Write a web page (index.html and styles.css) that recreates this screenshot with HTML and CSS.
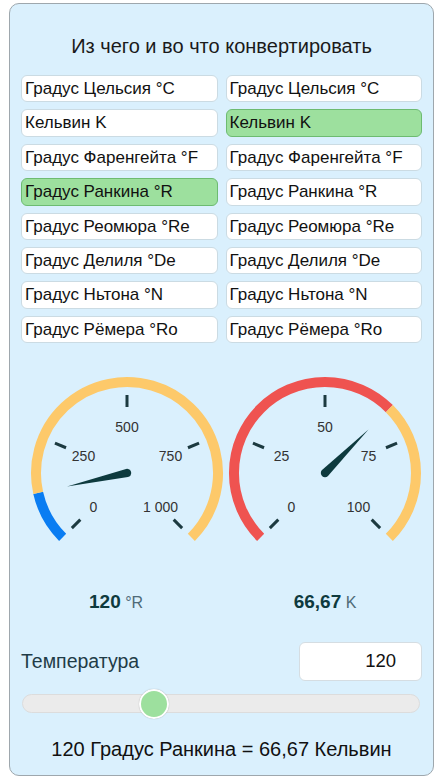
FILE: index.html
```html
<!DOCTYPE html>
<html lang="ru">
<head>
<meta charset="utf-8">
<title>Конвертер температуры</title>
<link rel="stylesheet" href="styles.css">
</head>
<body>
<div class="panel">
  <h1 class="title">Из чего и во что конвертировать</h1>
  <div class="units">
    <div class="unit">Градус Цельсия °C</div>
    <div class="unit">Градус Цельсия °C</div>
    <div class="unit">Кельвин K</div>
    <div class="unit selected">Кельвин K</div>
    <div class="unit">Градус Фаренгейта °F</div>
    <div class="unit">Градус Фаренгейта °F</div>
    <div class="unit selected">Градус Ранкина °R</div>
    <div class="unit">Градус Ранкина °R</div>
    <div class="unit">Градус Реомюра °Re</div>
    <div class="unit">Градус Реомюра °Re</div>
    <div class="unit">Градус Делиля °De</div>
    <div class="unit">Градус Делиля °De</div>
    <div class="unit">Градус Ньтона °N</div>
    <div class="unit">Градус Ньтона °N</div>
    <div class="unit">Градус Рёмера °Ro</div>
    <div class="unit">Градус Рёмера °Ro</div>
  </div>

  <div class="gauges">
    <svg class="gauge" width="198" height="270" viewBox="0 0 198 270">
      <path class="band blue" d="M 34.65 182.35 A 91 91 0 0 1 10.19 137.85"/>
      <path class="band orange" d="M 10.19 137.85 A 91 91 0 1 1 163.35 182.35"/>
      <g class="ticks">
        <line x1="52.33" y1="164.67" x2="43.85" y2="173.15"/>
        <line x1="38.02" y1="92.74" x2="26.94" y2="88.15"/>
        <line x1="99" y1="52" x2="99" y2="40"/>
        <line x1="159.98" y1="92.74" x2="171.06" y2="88.15"/>
        <line x1="145.67" y1="164.67" x2="154.15" y2="173.15"/>
      </g>
      <g class="labels">
        <text x="65.5" y="156.5">0</text>
        <text x="55.5" y="106">250</text>
        <text x="99" y="76.5">500</text>
        <text x="142.5" y="106">750</text>
        <text x="132.5" y="156.5">1 000</text>
      </g>
      <path class="needle" transform="rotate(-102.6 99 118)" d="M 94.8 118 L 99 56.5 L 103.2 118 A 4.2 4.2 0 0 1 94.8 118 Z"/>
      <text class="value" x="61" y="253"><tspan class="num">120</tspan><tspan class="unit-sym"> °R</tspan></text>
    </svg>
    <svg class="gauge" width="198" height="270" viewBox="0 0 198 270">
      <path class="band red" d="M 34.65 182.35 A 91 91 0 1 1 163.35 53.65"/>
      <path class="band orange" d="M 163.35 53.65 A 91 91 0 0 1 163.35 182.35"/>
      <g class="ticks">
        <line x1="52.33" y1="164.67" x2="43.85" y2="173.15"/>
        <line x1="38.02" y1="92.74" x2="26.94" y2="88.15"/>
        <line x1="99" y1="52" x2="99" y2="40"/>
        <line x1="159.98" y1="92.74" x2="171.06" y2="88.15"/>
        <line x1="145.67" y1="164.67" x2="154.15" y2="173.15"/>
      </g>
      <g class="labels">
        <text x="65.5" y="156.5">0</text>
        <text x="55.5" y="106">25</text>
        <text x="99" y="76.5">50</text>
        <text x="142.5" y="106">75</text>
        <text x="132.5" y="156.5">100</text>
      </g>
      <path class="needle" transform="rotate(45 99 118)" d="M 94.8 118 L 99 56.5 L 103.2 118 A 4.2 4.2 0 0 1 94.8 118 Z"/>
      <text class="value" x="99" y="253" text-anchor="middle"><tspan class="num">66,67</tspan><tspan class="unit-sym"> K</tspan></text>
    </svg>
  </div>

  <div class="temp-row">
    <label class="temp-label" for="temp">Температура</label>
    <input class="temp-input" id="temp" type="text" value="120">
  </div>

  <div class="slider">
    <div class="track"></div>
    <div class="thumb" style="left: 117px"></div>
  </div>

  <p class="result">120 Градус Ранкина = 66,67 Кельвин</p>
</div>
</body>
</html>
```

FILE: styles.css
```css
* { box-sizing: border-box; }

html, body {
  margin: 0;
  padding: 0;
  background: #ffffff;
}

body {
  font-family: "Liberation Sans", Arial, sans-serif;
  color: #111;
}

.panel {
  width: 425px;
  height: 773px;
  margin: 3px 0 0 9px;
  padding: 0 11px 0 11px;
  background: #daf0fd;
  border: 1px solid #9ea7ad;
  border-radius: 10px;
  display: flex;
  flex-direction: column;
}

.title {
  margin: 31px 0 0 0;
  font-size: 20px;
  line-height: 23px;
  font-weight: normal;
  text-align: center;
  color: #1a1a1a;
}

.units {
  margin-top: 17px;
  display: grid;
  grid-template-columns: 1fr 1fr;
  column-gap: 8px;
  row-gap: 7px;
}

.unit {
  height: 27.4px;
  padding: 0 0 0 3px;
  background: #ffffff;
  border: 1px solid #cbdbe3;
  border-radius: 6px;
  font-size: 17px;
  line-height: 25.4px;
  color: #111;
  white-space: nowrap;
}

.unit.selected {
  background: #9de09e;
  border-color: #6dbb71;
}

.gauges {
  margin-top: 11.8px;
  padding-left: 7px;
  display: flex;
}

.gauge {
  display: block;
  flex: 0 0 198px;
  font-family: "Liberation Sans", Arial, sans-serif;
}

.band {
  fill: none;
  stroke-width: 10;
}
.band.blue { stroke: #0a7df2; }
.band.orange { stroke: #fdc96a; }
.band.red { stroke: #ef5350; }

.ticks line {
  stroke: #1c3a40;
  stroke-width: 3;
}

.labels text {
  font-size: 14px;
  fill: #333333;
  text-anchor: middle;
}

.needle {
  fill: #0d3a3e;
}

.value .num {
  font-size: 19px;
  font-weight: bold;
  fill: #0e3a3e;
}
.value .unit-sym {
  font-size: 16px;
  fill: #4f6b78;
}

.temp-row {
  margin-top: 17px;
  display: flex;
  justify-content: space-between;
  align-items: center;
}

.temp-label {
  font-size: 19.5px;
  color: #1f3c47;
}

.temp-input {
  width: 123px;
  height: 39px;
  margin: 0;
  padding: 0 25px 0 6px;
  border: 1px solid #d5dde2;
  border-radius: 6px;
  background: #ffffff;
  font-family: "Liberation Sans", Arial, sans-serif;
  font-size: 18.5px;
  color: #111;
  text-align: right;
  outline: none;
}

.slider {
  position: relative;
  height: 30px;
  margin: 7.7px 2px 0 1px;
  display: flex;
  align-items: center;
}

.track {
  flex: 1;
  height: 19px;
  background: #ebebeb;
  border: 1px solid #dcdcdc;
  border-radius: 10px;
}

.thumb {
  position: absolute;
  top: 0;
  width: 30px;
  height: 30px;
  border-radius: 50%;
  background: #9de09e;
  border: 2px solid #ffffff;
  box-shadow: 0 0 1px rgba(0, 0, 0, 0.35);
}

.result {
  margin: 18.9px 0 0 0;
  font-size: 20px;
  line-height: 23px;
  text-align: center;
  color: #111;
}
```
